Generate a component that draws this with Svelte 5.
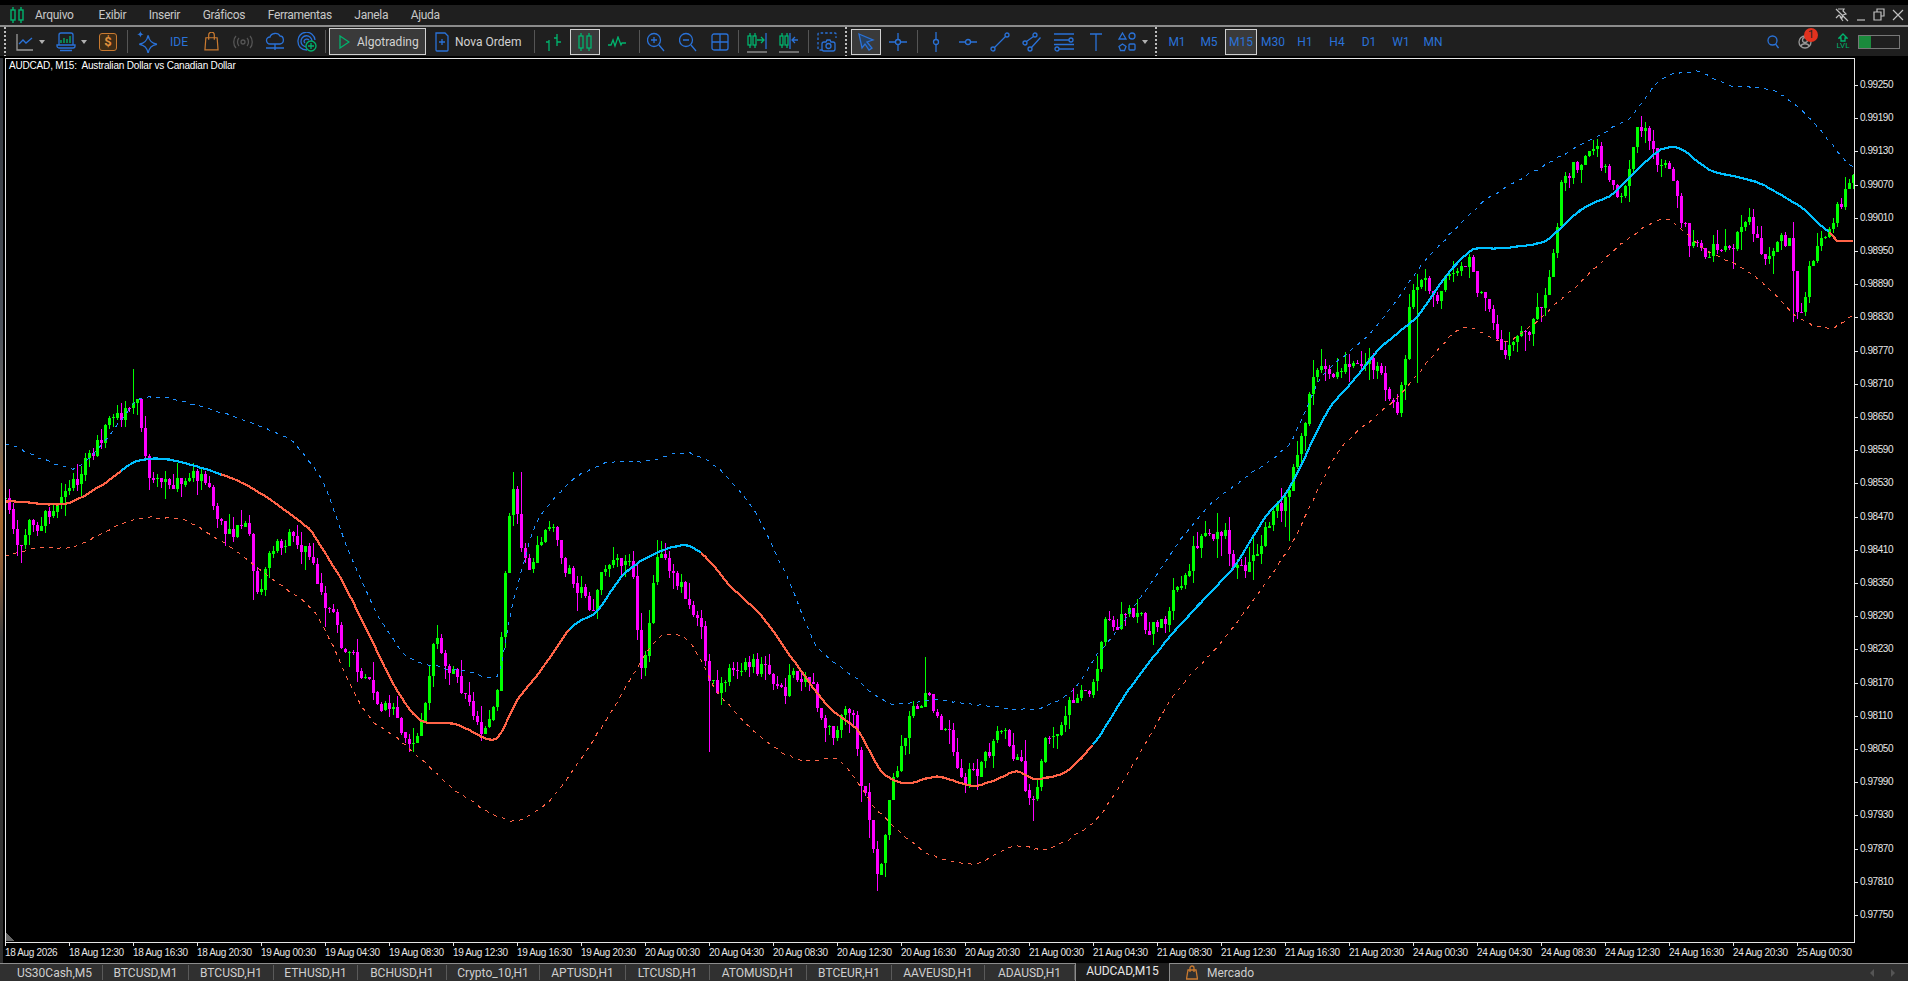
<script>
  const S = 1908 / 1568;

  // waypoints read off the chart, in shrunk picture coordinates
  const closePts = [[5,410],[12,440],[30,425],[50,415],[60,405],[75,378],[90,345],[100,350],[110,330],[118,360],[125,390],[145,395],[170,405],[190,435],[205,430],[210,475],[225,440],[245,445],[262,480],[280,530],[300,565],[320,590],[330,600],[345,590],[358,530],[370,545],[385,575],[400,590],[410,540],[420,405],[430,470],[450,435],[465,470],[485,495],[505,450],[520,480],[527,540],[540,470],[555,475],[575,510],[585,565],[600,550],[618,535],[640,575],[655,550],[680,595],[700,595],[710,650],[722,710],[730,650],[745,600],[760,570],[775,600],[800,635],[822,600],[835,615],[848,665],[860,615],[880,575],[895,560],[910,510],[935,510],[950,515],[965,490],[990,430],[1005,440],[1022,475],[1040,440],[1055,420],[1070,360],[1085,290],[1100,315],[1125,290],[1150,325],[1160,240],[1180,245],[1208,215],[1220,250],[1245,280],[1270,235],[1285,135],[1310,130],[1330,155],[1348,100],[1365,135],[1395,210],[1435,180],[1450,205],[1470,200],[1478,255],[1490,205],[1505,195],[1522,145]];
  const maPts = [[5,412],[55,414],[85,398],[110,380],[125,377],[140,378],[170,386],[205,400],[255,435],[280,475],[300,515],[325,565],[345,592],[375,595],[400,607],[410,605],[425,575],[445,550],[470,515],[490,503],[510,475],[525,462],[545,452],[565,448],[580,458],[600,482],[625,505],[650,540],[680,580],[705,600],[725,635],[745,644],[770,638],[800,646],[815,642],[835,634],[850,640],[875,635],[900,610],[925,570],[960,525],[985,497],[1015,465],[1040,425],[1060,400],[1090,340],[1110,315],[1135,285],[1165,260],[1190,225],[1210,205],[1235,204],[1270,198],[1300,172],[1325,160],[1345,140],[1365,123],[1380,122],[1405,140],[1445,150],[1480,170],[1505,192],[1510,198],[1522,198]];
  const upperPts = [[5,365],[30,375],[60,385],[80,370],[100,345],[115,327],[150,330],[200,345],[240,362],[265,395],[285,450],[310,505],[335,540],[360,548],[385,552],[410,555],[420,500],[440,430],[470,395],[500,380],[530,379],[565,372],[590,385],[620,420],[650,480],[670,530],[700,555],[730,578],[770,575],[810,580],[850,583],[880,570],[900,540],[930,500],[985,425],[1020,395],[1060,365],[1085,310],[1130,270],[1170,215],[1220,165],[1280,130],[1340,97],[1365,65],[1395,59],[1420,70],[1460,75],[1490,100],[1522,137]];
  const lowerPts = [[5,457],[30,450],[60,450],[90,435],[115,426],[150,427],[190,450],[230,480],[260,505],[300,585],[330,610],[375,650],[420,675],[450,660],[480,620],[505,580],[540,525],[565,525],[590,570],[630,610],[660,625],[690,625],[720,665],[760,700],[800,710],[835,695],[860,698],[900,675],[930,630],[965,570],[1010,520],[1060,450],[1100,370],[1150,325],[1200,270],[1240,280],[1290,240],[1340,195],[1370,180],[1400,205],[1440,225],[1480,262],[1505,270],[1522,260]];
  // long wicks: [x, y] in the same coordinates
  const spikes = [[110,303],[422,388],[427,388],[760,540],[1165,225],[1348,95],[209,493],[527,558],[582,618],[722,732],[848,675],[1165,315],[1058,445],[1472,265]];

  let seed = 78123;
  function rnd() {
    seed = (seed + 0x6d2b79f5) | 0;
    let t = Math.imul(seed ^ (seed >>> 15), 1 | seed);
    t = (t + Math.imul(t ^ (t >>> 7), 61 | t)) ^ t;
    return ((t ^ (t >>> 14)) >>> 0) / 4294967296;
  }

  function sampler(pts) {
    const p = pts.map(([x, y]) => [x * S, y * S]);
    return (x) => {
      let i = 0;
      while (i < p.length - 2 && p[i + 1][0] < x) i++;
      const a = p[Math.max(i - 1, 0)], b = p[i], c = p[i + 1], d = p[Math.min(i + 2, p.length - 1)];
      const t = Math.min(Math.max((x - b[0]) / (c[0] - b[0]), 0), 1);
      const linear = b[1] + (c[1] - b[1]) * t;
      const curve = 0.5 * (2 * b[1] + (c[1] - a[1]) * t + (2 * a[1] - 5 * b[1] + 4 * c[1] - d[1]) * t * t + (3 * b[1] - a[1] - 3 * c[1] + d[1]) * t * t * t);
      return Math.min(Math.max(curve, Math.min(b[1], c[1]) - 6), Math.max(b[1], c[1]) + 6) * 0.7 + linear * 0.3;
    };
  }

  function line(pts, from = 5, to = 1853, wobble = 0) {
    const f = sampler(pts);
    let d = '';
    for (let x = from; x <= to; x += 4) {
      d += (d ? 'L' : 'M') + x + ' ' + (f(x) + (rnd() - 0.5) * wobble).toFixed(1);
    }
    return d;
  }

  const closeAt = sampler(closePts);
  let upPath = '', downPath = '';
  let prev = closeAt(5);
  let drift = 0;
  for (let x = 5; x <= 1853; x += 4) {
    const open = prev;
    drift = drift * 0.6 + (rnd() - 0.5) * 24;
    const close = closeAt(x) + drift;
    let hi = Math.min(open, close) - rnd() * rnd() * 22;
    let lo = Math.max(open, close) + rnd() * rnd() * 22;
    for (const [sx, sy] of spikes) {
      if (Math.abs(sx * S - x) < 2) {
        if (sy * S < hi && Math.abs(sy * S - close) < 130) hi = sy * S;
        else if (sy * S > lo && Math.abs(sy * S - close) < 130) lo = sy * S;
      }
    }
    const up = close <= open;
    const top = Math.round(Math.min(open, close));
    const h = Math.max(Math.round(Math.abs(open - close)), 1);
    const seg = `M${x} ${Math.round(hi)}h1V${Math.round(lo)}h-1z` + `M${x - 1} ${top}h3v${h}h-3z`;
    if (up) upPath += seg; else downPath += seg;
    prev = close;
  }

  const maSegments = [
    [5, 122, 'orange'], [121, 222, 'blue'], [221, 570, 'orange'], [569, 704, 'blue'],
    [703, 1096, 'orange'], [1095, 1832, 'blue'], [1831, 1853, 'orange']
  ];
  const maFix = (a) => a - ((a - 5) % 4);

  const prices = Array.from({ length: 26 }, (_, i) => ({
    y: 85 + i * 33.2,
    label: (0.9925 - i * 0.0006).toFixed(5)
  }));

  const times = ['18 Aug 2026', '18 Aug 12:30', '18 Aug 16:30', '18 Aug 20:30'];
  for (const day of ['19', '20', '21', '24']) {
    for (const h of ['00', '04', '08', '12', '16', '20']) times.push(`${day} Aug ${h}:30`);
  }
  times.push('25 Aug 00:30');

  const menu = ['Arquivo', 'Exibir', 'Inserir', 'Gráficos', 'Ferramentas', 'Janela', 'Ajuda'];
  const frames = ['M1', 'M5', 'M15', 'M30', 'H1', 'H4', 'D1', 'W1', 'MN'];
  const tabs = [
    ['US30Cash,M5', 96], ['BTCUSD,M1', 86], ['BTCUSD,H1', 85], ['ETHUSD,H1', 84], ['BCHUSD,H1', 89],
    ['Crypto_10,H1', 93], ['APTUSD,H1', 86], ['LTCUSD,H1', 84], ['ATOMUSD,H1', 97], ['BTCEUR,H1', 85],
    ['AAVEUSD,H1', 93], ['ADAUSD,H1', 90]
  ];
</script>

<div class="app">
  <div class="topstrip"></div>
  <header class="menubar">
    <svg class="logo" viewBox="0 0 14 18" width="14" height="18"><path d="M3 1v3M3 14v3M11 1v3M11 14v3" /><rect x="1" y="4" width="4" height="10" /><rect x="9" y="4" width="4" height="10" /></svg>
    <nav class="menu">
      {#each menu as item}<span>{item}</span>{/each}
    </nav>
    <div class="winbtns">
      <svg viewBox="0 0 14 14" width="14" height="14"><path d="M3 1h6l-1 2 3 3-3 1-1 3-3-3-3 3M1 1l12 12M8 13L5 9" /></svg>
      <svg viewBox="0 0 10 14" width="10" height="14"><path d="M1 12h8" /></svg>
      <svg viewBox="0 0 12 14" width="12" height="14"><path d="M4 4V1h7v7H8M1 4h7v8H1z" /></svg>
      <svg viewBox="0 0 12 14" width="12" height="14"><path d="M1 2l10 10M11 2L1 12" /></svg>
    </div>
  </header>
  <div class="rule"></div>

  <div class="toolbar">
    <i class="grip g1"></i>
    <div class="drop first">
      <svg class="ic" viewBox="0 0 18 18" width="18" height="18"><path class="gray" d="M1 1v16h16" /><path d="M3 11l4-4 3 3 6-5" /></svg>
      <b class="caret"></b>
    </div>
    <div class="drop second">
      <svg class="ic" viewBox="0 0 20 20" width="20" height="20"><path d="M3 13V3a2 2 0 0 1 2-2h10a2 2 0 0 1 2 2v10M1 13h18v1a2 2 0 0 1-2 2H3a2 2 0 0 1-2-2zM4 18.500h12" /><path class="green" d="M5 11V8M8 11V6M11 11V7M14 11V4" /></svg>
      <b class="caret"></b>
    </div>
    <div class="slot dollar">$</div>
    <i class="sep s-a"></i>

    <div class="slot">
      <svg class="ic" viewBox="0 0 20 20" width="22" height="22"><path d="M11 4c1 5 3 7 8 8-5 1-7 3-8 8-1-5-3-7-8-8 5-1 7-3 8-8z" /><path class="fill" d="M4 0c.4 2 1 2.600 3 3-2 .4-2.600 1-3 3-.4-2-1-2.600-3-3 2-.4 2.600-1 3-3z" /></svg>
    </div>
    <div class="slot ide">IDE</div>
    <div class="slot">
      <svg class="ic orange" viewBox="0 0 16 20" width="15" height="19"><path d="M2 6h12l1 13H1zM5 8V3a3 3 0 0 1 6 0v5" /></svg>
    </div>
    <div class="slot">
      <svg class="ic dim" viewBox="0 0 20 14" width="20" height="14"><circle cx="10" cy="7" r="2" /><path d="M6 3c-2 2-2 6 0 8M14 3c2 2 2 6 0 8M3 1c-3 3-3 9 0 12M17 1c3 3 3 9 0 12" /></svg>
    </div>
    <div class="slot">
      <svg class="ic" viewBox="0 0 20 20" width="20" height="20"><path d="M5 12a3.500 3.500 0 0 1 0-7c1-4 8-5 10-1 4 0 5 7 0 8zM1 16h18M10 12v6" /></svg>
    </div>
    <div class="slot">
      <svg class="ic" viewBox="0 0 20 20" width="20" height="20"><path d="M10 18C4 18 1 14 1 9.500A8.500 8.500 0 0 1 18 8M9 15c-3-1-5-3-5-5.500a5.500 5.500 0 0 1 11-.5M8 11c-1-1-1-2-1-2a3 3 0 0 1 5-1" /><circle class="green" cx="14" cy="14" r="5" /><path class="green" d="M14 11v6M11 14h6" /></svg>
    </div>
    <i class="sep s-b"></i>

    <div class="pressed algo">
      <svg class="ic green" viewBox="0 0 12 14" width="12" height="14"><path d="M2 1l9 6-9 6z" /></svg>
      <span>Algotrading</span>
    </div>
    <div class="order">
      <svg class="ic" viewBox="0 0 14 20" width="14" height="20"><path d="M1 1h9l3 3v14a1 1 0 0 1-1 1H2a1 1 0 0 1-1-1zM7 7v6M4 10h6" /></svg>
      <span>Nova Ordem</span>
    </div>
    <i class="sep s-c"></i>

    <div class="slot">
      <svg class="ic green" viewBox="0 0 18 18" width="18" height="18"><path d="M5 7v11M2 9h3M5 13h0M13 1v12M13 5h-3M13 9h4" /></svg>
    </div>
    <div class="slot pressed tight">
      <svg class="ic green" viewBox="0 0 14 20" width="14" height="20"><path d="M3 1v3M3 16v3M11 1v3M11 16v3" /><rect x="1" y="4" width="4" height="12" /><rect x="9" y="4" width="4" height="12" /></svg>
    </div>
    <div class="slot">
      <svg class="ic green" viewBox="0 0 18 12" width="18" height="12"><path d="M0 9h3l2-5 2 6 3-9 3 8 1-2h4" /></svg>
    </div>
    <i class="sep s-d"></i>

    <div class="slot">
      <svg class="ic" viewBox="0 0 18 20" width="18" height="20"><circle cx="7" cy="8" r="6.500" /><path d="M12 13l5 6M7 5v6M4 8h6" /></svg>
    </div>
    <div class="slot">
      <svg class="ic" viewBox="0 0 18 20" width="18" height="20"><circle cx="7" cy="8" r="6.500" /><path d="M12 13l5 6M4 8h6" /></svg>
    </div>
    <div class="slot">
      <svg class="ic" viewBox="0 0 18 20" width="18" height="20"><rect x="1" y="2" width="16" height="16" rx="2" /><path d="M9 2v16M1 10h16" /></svg>
    </div>
    <i class="sep s-e"></i>

    <div class="slot">
      <svg class="ic" viewBox="0 0 20 24" width="20" height="24"><path class="green" d="M3 3v3M3 15v3M8 3v3M8 15v3M10 10h7M14 7l3 3-3 3" /><rect class="green" x="1" y="6" width="3" height="9" /><rect class="green" x="6" y="6" width="3" height="9" /><path d="M19 3v16" /><path class="gray" d="M0 22h20" /></svg>
    </div>
    <div class="slot">
      <svg class="ic" viewBox="0 0 20 24" width="20" height="24"><path class="green" d="M3 3v3M3 15v3M8 3v3M8 15v3" /><rect class="green" x="1" y="6" width="3" height="9" /><rect class="green" x="6" y="6" width="3" height="9" /><path d="M11 3v16M19 10h-6M16 7l-3 3 3 3" /><path class="gray" d="M0 22h20" /></svg>
    </div>
    <i class="sep s-f"></i>

    <div class="slot">
      <svg class="ic" viewBox="0 0 20 20" width="20" height="20"><path stroke-dasharray="2.500 2" d="M5 18H2a1 1 0 0 1-1-1V2a1 1 0 0 1 1-1h16a1 1 0 0 1 1 1v4" /><path d="M7 10h2l1-2h3l1 2h2a2 2 0 0 1 2 2v5a2 2 0 0 1-2 2H7a2 2 0 0 1-2-2v-5a2 2 0 0 1 2-2z" /><circle cx="11.500" cy="14" r="2.500" /></svg>
    </div>
    <i class="grip g2"></i>

    <div class="slot pressed cursor">
      <svg class="ic" viewBox="0 0 18 20" width="18" height="20"><path class="navy" d="M2 2l14 6-6 2 5 6-3 2-4-6-3 4z" /></svg>
    </div>
    <div class="slot">
      <svg class="ic" viewBox="0 0 18 20" width="18" height="20"><circle cx="9" cy="10" r="2.500" /><path d="M9 1v6.500M9 12.500V19M0 10h6.500M11.500 10H18" /></svg>
    </div>
    <i class="sep s-g"></i>

    <div class="slot">
      <svg class="ic" viewBox="0 0 8 20" width="8" height="20"><circle cx="4" cy="10" r="2.500" /><path d="M4 0v7.500M4 12.500V20" /></svg>
    </div>
    <div class="slot">
      <svg class="ic" viewBox="0 0 18 8" width="18" height="8"><circle cx="9" cy="4" r="2.500" /><path d="M0 4h6.500M11.500 4H18" /></svg>
    </div>
    <div class="slot">
      <svg class="ic" viewBox="0 0 20 20" width="20" height="20"><circle cx="3" cy="17" r="2" /><circle cx="17" cy="3" r="2" /><path d="M4.500 15.500l11-11" /></svg>
    </div>
    <div class="slot">
      <svg class="ic" viewBox="0 0 20 20" width="20" height="20"><circle cx="3" cy="11" r="2" /><circle cx="13" cy="3" r="2" /><circle cx="8" cy="17" r="2" /><path d="M4.500 9.500l7-5M9.500 15.500l9-10" /></svg>
    </div>
    <div class="slot">
      <svg class="ic" viewBox="0 0 20 20" width="20" height="20"><circle cx="17" cy="8" r="2" /><circle cx="3" cy="17" r="2" /><path d="M0 2h20M0 8h15M0 12.500h20M5 17h15" /></svg>
    </div>
    <div class="slot">
      <svg class="ic" viewBox="0 0 14 18" width="14" height="18"><path d="M1 1h12M7 1v17" /></svg>
    </div>
    <div class="drop shapes">
      <svg class="ic" viewBox="0 0 18 20" width="18" height="20"><path d="M4.500 1L8 7H1z" /><circle cx="14" cy="4" r="3" /><path d="M4.500 12l3.500 2.500-1.500 4h-4L1 14.500z" /><rect x="11" y="12" width="6" height="6" rx="1" /></svg>
      <b class="caret"></b>
    </div>
    <i class="grip g3"></i>

    <div class="frames">
      {#each frames as tf}
        <span class:pressed={tf === 'M15'}>{tf}</span>
      {/each}
    </div>

    <div class="status">
      <svg class="ic" viewBox="0 0 12 14" width="12" height="14"><circle cx="5.500" cy="5.500" r="4.500" /><path d="M8.500 9l3 4" /></svg>
      <div class="account">
        <svg class="ic gray" viewBox="0 0 14 14" width="14" height="14"><circle cx="7" cy="7" r="6" /><circle cx="7" cy="5" r="2.500" /><path d="M3 11c1-3 7-3 8 0" /></svg>
        <em>1</em>
      </div>
      <div class="level">
        <svg class="ic green" viewBox="0 0 10 9" width="10" height="9"><path d="M5 1l4 4H7v3H3V5H1z" /></svg>
        <span>LVL</span>
      </div>
      <div class="meter"><div></div></div>
    </div>
  </div>

  <main class="workspace">
    <div class="plot">
      <svg class="chart" viewBox="6 59 1848 883" shape-rendering="crispEdges">
        <path d="M6 941v-9l8 9z" fill="#666" />
        <path d={upPath} fill="#00ff00" />
        <path d={downPath} fill="#ff00ff" />
        <path d={line(upperPts, 5, 1853, 2)} class="band" stroke="#1e90ff" />
        <path d={line(lowerPts, 5, 1853, 2)} class="band" stroke="#ff6347" />
        {#each maSegments as [a, b, tone]}
          <path d={line(maPts, maFix(a), b, 0.8)} class="ma {tone}" />
        {/each}
      </svg>
      <div class="title">AUDCAD, M15:&nbsp; Australian Dollar vs Canadian Dollar</div>
    </div>
    <div class="prices">
      {#each prices as p}
        <span style="top: {p.y - 58 - 6}px">{p.label}</span>
      {/each}
    </div>
    <div class="times">
      {#each times as t}
        <span>{t}</span>
      {/each}
    </div>
  </main>

  <footer class="tabs">
    {#each tabs as [name, w]}
      <span class="tab" style="width: {w}px">{name}</span>
    {/each}
    <span class="tab active">AUDCAD,M15</span>
    <span class="market">
      <svg class="ic orange" viewBox="0 0 12 15" width="12" height="15"><path d="M2 5h8l1.500 9h-11zM4 7V3a2 2 0 0 1 4 0v4" /></svg>
      Mercado
    </span>
    <span class="arrows"><b class="left"></b><b class="right"></b></span>
  </footer>
</div>

<style>
  :global(body) {
    margin: 0;
    background: #000;
  }

  .app {
    width: 1908px;
    height: 981px;
    display: flex;
    flex-direction: column;
    overflow: hidden;
    background: #000;
    color: #c8c8c8;
    font-family: Roboto, "Liberation Sans", sans-serif;
    font-size: 12px;
  }

  .topstrip {
    height: 5px;
  }

  .menubar {
    height: 20px;
    display: flex;
    align-items: center;
    background: #1f1f1f;
    padding-left: 10px;
  }

  .logo {
    fill: none;
    stroke: #00b46e;
    stroke-width: 1.4;
  }

  .menu {
    display: flex;
    gap: 22.5px;
    margin-left: 11px;
    letter-spacing: -0.3px;
  }

  .menu span:first-child {
    margin-right: 2.5px;
  }

  .winbtns {
    margin-left: auto;
    display: flex;
    align-items: center;
    gap: 7px;
    padding-right: 4px;
  }

  .winbtns svg {
    fill: none;
    stroke: #c0c0c0;
    stroke-width: 1.2;
  }

  .rule {
    height: 2px;
    background: #8c8c8c;
  }

  .toolbar {
    height: 29px;
    display: flex;
    align-items: center;
    background: #1f1f1f;
    padding-left: 4px;
  }

  .grip {
    width: 2px;
    height: 29px;
    background: repeating-linear-gradient(#bdbdbd 0 2px, transparent 2px 4px);
  }

  .g1 {
    margin-right: 10px;
  }

  .g2 {
    margin: 0 4px 0 2px;
  }

  .g3 {
    margin: 0 3px 0 5px;
  }

  .sep {
    width: 1px;
    height: 23px;
    background: #555;
  }

  .s-a { margin: 0 3px; }
  .s-b { margin: 0 3px 0 2px; }
  .s-c { margin: 0 2px 0 8px; }
  .s-d { margin: 0 0 0 6px; }
  .s-e { margin: 0 2px; }
  .s-f { margin: 0 2px 0 3px; }
  .s-g { margin: 0 2px 0 3px; }

  .slot {
    width: 32px;
    height: 26px;
    flex: none;
    display: flex;
    align-items: center;
    justify-content: center;
    box-sizing: border-box;
  }

  .drop {
    height: 26px;
    display: flex;
    align-items: center;
    flex: none;
  }

  .first {
    width: 32px;
    margin-right: 8px;
  }

  .second {
    width: 32px;
  }

  .caret {
    border: 3.5px solid transparent;
    border-top: 4px solid #b0b0b0;
    border-bottom: 0;
    margin-left: 5px;
  }

  .shapes {
    width: 38px;
    padding-left: 6px;
    box-sizing: border-box;
  }

  .shapes .caret {
    margin-left: 6px;
  }

  .ic {
    fill: none;
    stroke: #2a72d8;
    stroke-width: 1.3;
    flex: none;
  }

  .ic .green,
  .ic.green {
    stroke: #00b46e;
  }

  .ic .gray,
  .ic.gray {
    stroke: #9a9a9a;
  }

  .ic.orange {
    stroke: #c97a30;
  }

  .ic.dim {
    stroke: #555;
  }

  .ic .fill {
    fill: #2a72d8;
    stroke: none;
  }

  .ic .navy {
    fill: #27405f;
  }

  .dollar {
    width: 18px;
    height: 18px;
    margin: 0 7px 0 11px;
    border: 1px solid #c97a30;
    border-radius: 3px;
    background: #3e2c16;
    color: #e08f3c;
    font-weight: 700;
    font-size: 13px;
  }

  .ide {
    color: #2a72d8;
    font-size: 12px;
  }

  .pressed {
    border: 1px solid #d0d0d0;
    background: #3a3a3a;
    box-sizing: border-box;
  }

  .algo {
    width: 97px;
    height: 27px;
    flex: none;
    display: flex;
    align-items: center;
    padding-left: 8px;
    gap: 7px;
    color: #d2d2d2;
  }

  .order {
    width: 95px;
    margin-left: 5px;
    flex: none;
    display: flex;
    align-items: center;
    padding-left: 4px;
    gap: 6px;
    box-sizing: border-box;
    color: #d2d2d2;
  }

  .tight {
    width: 30px;
    margin: 0 1px;
  }

  .cursor {
    width: 30px;
    margin-right: 1px;
  }

  .frames {
    display: flex;
    color: #2a72d8;
    padding-left: 1px;
  }

  .frames span {
    width: 32px;
    height: 26px;
    display: flex;
    align-items: center;
    justify-content: center;
    box-sizing: border-box;
  }

  .status {
    margin-left: auto;
    display: flex;
    align-items: center;
    padding-right: 8px;
  }

  .account {
    position: relative;
    margin-left: 19px;
    display: flex;
  }

  .account em {
    position: absolute;
    top: -7px;
    left: 6px;
    width: 14px;
    height: 14px;
    border-radius: 50%;
    background: #e2321f;
    color: #222;
    font-style: normal;
    font-size: 11px;
    line-height: 14px;
    text-align: center;
  }

  .level {
    margin-left: 24px;
    width: 14px;
    display: flex;
    flex-direction: column;
    align-items: center;
    color: #00b46e;
    font-size: 8px;
    line-height: 8px;
  }

  .meter {
    width: 42px;
    height: 14px;
    margin-left: 8px;
    border: 1px solid #777;
    box-sizing: border-box;
  }

  .meter div {
    width: 12px;
    height: 100%;
    background: #1a8a3c;
  }

  .workspace {
    flex: 1;
    margin-top: 2px;
    padding-left: 5px;
    display: grid;
    grid-template-columns: 1850px 1fr;
    grid-template-rows: 885px 1fr;
    background: linear-gradient(#2f333a, #4a505a 30%, #6a6660 40%, #a8682c 50%, #8a5a34 56%, #3c3c3c 64%, #2c2c2c) 0 0 / 3px 100% no-repeat;
    font-family: "Liberation Sans", sans-serif;
    font-size: 10px;
    color: #e6e6e6;
  }

  .plot {
    position: relative;
    border: 1px solid #e6e6e6;
    overflow: hidden;
  }

  .chart {
    display: block;
    width: 1848px;
    height: 883px;
  }

  .band {
    fill: none;
    stroke-width: 1;
    stroke-dasharray: 4 5;
  }

  .ma {
    fill: none;
    stroke-width: 2.2;
  }

  .ma.orange {
    stroke: #ff6347;
  }

  .ma.blue {
    stroke: #00bfff;
  }

  .title {
    position: absolute;
    top: 1px;
    left: 3px;
    letter-spacing: -0.18px;
    line-height: 12px;
    color: #fff;
  }

  .prices {
    position: relative;
  }

  .prices span {
    position: absolute;
    left: 0;
    padding-left: 5px;
    line-height: 12px;
    letter-spacing: -0.45px;
  }

  .prices span::before {
    content: '';
    position: absolute;
    left: 0;
    top: 6px;
    width: 3px;
    height: 1px;
    background: #e6e6e6;
  }

  .times {
    grid-column: 1 / -1;
    display: flex;
  }

  .times span {
    position: relative;
    width: 64px;
    flex: none;
    box-sizing: border-box;
    padding-top: 4px;
    line-height: 12px;
    letter-spacing: -0.35px;
    white-space: nowrap;
  }

  .times span::before {
    content: '';
    position: absolute;
    left: 0;
    top: 0;
    width: 1px;
    height: 3px;
    background: #e6e6e6;
  }

  .tabs {
    height: 18px;
    flex: none;
    display: flex;
    align-items: flex-end;
    box-sizing: border-box;
    padding: 0 0 1px 7px;
    background: #303030;
    border-top: 1px solid #8c8c8c;
    color: #cfcfcf;
  }

  .tab {
    height: 15px;
    flex: none;
    display: flex;
    align-items: center;
    justify-content: center;
    box-sizing: border-box;
    border-right: 1px solid #5a5a5a;
  }

  .tab.active {
    width: 95px;
    height: 18px;
    margin-top: -1px;
    padding-bottom: 3px;
    align-self: flex-start;
    background: #1e1e1e;
    color: #e8e8e8;
    border-left: 1px solid #8c8c8c;
    border-right: 1px solid #8c8c8c;
  }

  .market {
    display: flex;
    align-items: center;
    gap: 9px;
    height: 15px;
    padding-left: 16px;
  }

  .arrows {
    margin-left: auto;
    display: flex;
    align-items: center;
    gap: 17px;
    height: 15px;
    padding-right: 13px;
  }

  .arrows b {
    border: 4px solid transparent;
  }

  .arrows .left {
    border-right: 4px solid #555;
    border-left: 0;
  }

  .arrows .right {
    border-left: 4px solid #555;
    border-right: 0;
  }
</style>
